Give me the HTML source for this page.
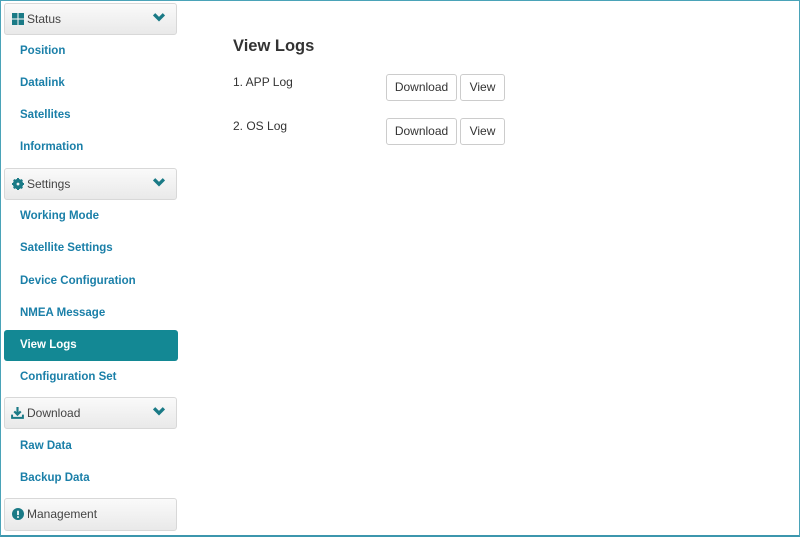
<!DOCTYPE html>
<html><head><style>
body{margin:0;width:800px;height:537px;background:#fff;font-family:"Liberation Sans",sans-serif;position:relative;overflow:hidden}
.frame{position:absolute;left:0;top:0;width:798px;height:534px;border:1px solid #4aa3b8;border-bottom:2px solid #3c96ad}
.ph{position:absolute;left:4px;width:173px;height:32px;border:1px solid #d8d8d8;border-radius:3px;background:linear-gradient(#fafafa,#e9e9e9);font-size:12px;color:#444;box-sizing:border-box;line-height:30px;padding-left:7px}
.ph svg{vertical-align:-2px;margin-right:3px}
.ch{position:absolute;right:8px;top:9px}
.l{position:absolute;left:20px;font-size:11.5px;font-weight:bold;color:#1a7fa8}
.act{position:absolute;left:4px;top:330px;width:174px;height:31px;background:#138894;border-radius:3px;color:#fff;font-weight:bold;font-size:11.5px;line-height:31px;padding-left:16px;box-sizing:border-box}
h1{position:absolute;left:233px;top:37px;margin:0;font-size:16.5px;color:#333}
.t{position:absolute;left:233px;font-size:12px;color:#333}
.b{position:absolute;height:27px;border:1px solid #ccc;border-radius:3px;box-sizing:border-box;font-size:12px;color:#333;line-height:25px;text-align:center;background:#fff}
</style></head><body>
<div class="frame"></div>
<div class="ph" style="top:3px"><svg width="12" height="12" viewBox="0 0 11 11" fill="#1a7a86"><rect x="0" y="0" width="5" height="5"/><rect x="6" y="0" width="5" height="5"/><rect x="0" y="6" width="5" height="5"/><rect x="6" y="6" width="5" height="5"/></svg>Status<svg class="ch" width="12" height="9" viewBox="0 0 11 8"><path d="M1 1l4.5 4.5L10 1" stroke="#1a7a86" stroke-width="3" fill="none"/></svg></div>
<div class="l" style="top:45px">Position</div>
<div class="l" style="top:77px">Datalink</div>
<div class="l" style="top:109px">Satellites</div>
<div class="l" style="top:141px">Information</div>
<div class="ph" style="top:168px"><svg width="12" height="12" viewBox="0 0 11 11"><circle cx="5.5" cy="5.5" r="3.5" fill="none" stroke="#1a7a86" stroke-width="2.5"/><path d="M5.5 0v11M0 5.5h11M1.6 1.6l7.8 7.8M9.4 1.6l-7.8 7.8" stroke="#1a7a86" stroke-width="1.8"/><circle cx="5.5" cy="5.5" r="1.3" fill="#f2f2f2"/></svg>Settings<svg class="ch" width="12" height="9" viewBox="0 0 11 8"><path d="M1 1l4.5 4.5L10 1" stroke="#1a7a86" stroke-width="3" fill="none"/></svg></div>
<div class="l" style="top:210px">Working Mode</div>
<div class="l" style="top:242px">Satellite Settings</div>
<div class="l" style="top:275px">Device Configuration</div>
<div class="l" style="top:307px">NMEA Message</div>
<div class="act">View Logs</div>
<div class="l" style="top:371px">Configuration Set</div>
<div class="ph" style="top:397px;padding-left:6px"><svg width="13" height="12" viewBox="0 0 12 11"><path d="M6 0v7M3 4l3 3 3-3" stroke="#1a7a86" stroke-width="2" fill="none"/><path d="M1 7v3h10V7" stroke="#1a7a86" stroke-width="1.8" fill="none"/></svg>Download<svg class="ch" width="12" height="9" viewBox="0 0 11 8"><path d="M1 1l4.5 4.5L10 1" stroke="#1a7a86" stroke-width="3" fill="none"/></svg></div>
<div class="l" style="top:440px">Raw Data</div>
<div class="l" style="top:472px">Backup Data</div>
<div class="ph" style="top:498px;height:33px;line-height:31px"><svg width="12" height="12" viewBox="0 0 11 11"><circle cx="5.5" cy="5.5" r="5.5" fill="#1a7a86"/><path d="M5.5 2.5v4" stroke="#fff" stroke-width="1.6"/><circle cx="5.5" cy="8.3" r=".9" fill="#fff"/></svg>Management</div>
<h1>View Logs</h1>
<div class="t" style="top:75px">1. APP Log</div>
<div class="t" style="top:119px">2. OS Log</div>
<div class="b" style="left:386px;top:74px;width:71px">Download</div>
<div class="b" style="left:460px;top:74px;width:45px">View</div>
<div class="b" style="left:386px;top:118px;width:71px">Download</div>
<div class="b" style="left:460px;top:118px;width:45px">View</div>
</body></html>
